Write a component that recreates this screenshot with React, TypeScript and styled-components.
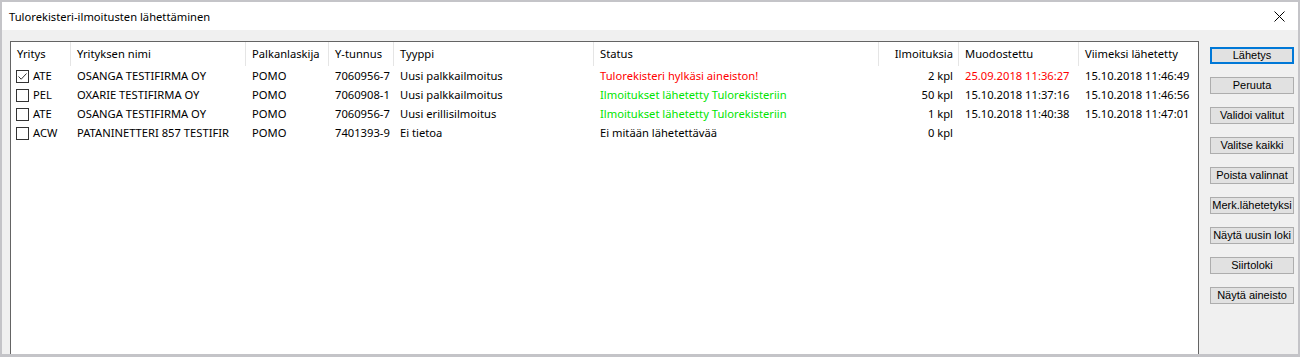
import React from "react";
import styled, { createGlobalStyle } from "styled-components";

const Global = createGlobalStyle`
  html, body { margin: 0; padding: 0; background: #fff; }
  body { font-family: "Noto Sans", "Liberation Sans", sans-serif; }
  * { box-sizing: border-box; }
`;

const COLS = "60px 175px 83px 65px 200px 285px 80px 120px 1fr";

const Window = styled.div`
  width: 1300px;
  height: 357px;
  border: 2px solid #c4c4c8;
  border-bottom-width: 3px;
  display: flex;
  flex-direction: column;
  overflow: hidden;
  background: #f0f0f0;
`;

const TitleBar = styled.div`
  height: 28px;
  flex: none;
  background: #fff;
  display: flex;
  align-items: center;
  justify-content: space-between;
  padding: 0 8px 0 7px;
  font-family: "Noto Sans", sans-serif;
  font-size: 11.2px;
  color: #000;
`;

const CloseBox = styled.div`
  width: 20px;
  height: 20px;
  display: flex;
  align-items: center;
  justify-content: center;
  margin-right: 1px;
`;

const Body = styled.div`
  flex: 1;
  display: flex;
  align-items: flex-start;
  padding: 11px 0 0 8px;
  min-height: 0;
`;

const ListPanel = styled.div`
  width: 1189px;
  height: 340px;
  flex: none;
  background: #fff;
  border: 1px solid #646464;
  font-family: "Noto Sans", sans-serif;
  font-size: 11.2px;
  color: #000;
`;

const HeaderRow = styled.div`
  display: grid;
  grid-template-columns: ${COLS};
  height: 24px;
`;

const HeaderCell = styled.div<{ $right?: boolean; $last?: boolean }>`
  display: flex;
  align-items: center;
  justify-content: ${(p) => (p.$right ? "flex-end" : "flex-start")};
  padding: ${(p) => (p.$right ? "0 5px 2px 0" : "0 0 2px 6px")};
  border-right: ${(p) => (p.$last ? "none" : "1px solid #e5e5e5")};
  white-space: nowrap;
`;

const DataRow = styled.div`
  display: grid;
  grid-template-columns: ${COLS};
  height: 19px;
`;

const Cell = styled.div<{ $right?: boolean; $color?: string }>`
  display: flex;
  align-items: center;
  justify-content: ${(p) => (p.$right ? "flex-end" : "flex-start")};
  padding: ${(p) => (p.$right ? "0 6px 0 0" : "0 0 0 6px")};
  color: ${(p) => p.$color || "#000"};
  white-space: nowrap;
  overflow: hidden;
`;

const FirstCell = styled(Cell)`
  padding-left: 5px;
  gap: 4px;
`;

const Check = styled.span`
  width: 13px;
  height: 13px;
  border: 1px solid #333;
  background: #fff;
  flex: none;
  display: flex;
  align-items: center;
  justify-content: center;
  margin-top: 2px;
`;

const ButtonColumn = styled.div`
  display: flex;
  flex-direction: column;
  gap: 13px;
  margin: 6px 0 0 11px;
`;

const Button = styled.button<{ $default?: boolean }>`
  width: 84px;
  height: 17px;
  padding: 0;
  margin: 0;
  background: #e1e1e1;
  border: ${(p) => (p.$default ? "2px solid #0078d7" : "1px solid #adadad")};
  font-family: "Liberation Sans", Arial, sans-serif;
  font-size: 11px;
  color: #000;
  line-height: 1;
  white-space: nowrap;
  display: flex;
  align-items: center;
  justify-content: center;
`;

type Row = {
  checked: boolean;
  code: string;
  name: string;
  calc: string;
  ytunnus: string;
  type: string;
  status: string;
  statusColor?: string;
  count: string;
  created: string;
  createdColor?: string;
  sent: string;
};

const RED = "#ff0000";
const GREEN = "#00e400";

const rows: Row[] = [
  {
    checked: true,
    code: "ATE",
    name: "OSANGA TESTIFIRMA OY",
    calc: "POMO",
    ytunnus: "7060956-7",
    type: "Uusi palkkailmoitus",
    status: "Tulorekisteri hylkäsi aineiston!",
    statusColor: RED,
    count: "2 kpl",
    created: "25.09.2018 11:36:27",
    createdColor: RED,
    sent: "15.10.2018 11:46:49",
  },
  {
    checked: false,
    code: "PEL",
    name: "OXARIE TESTIFIRMA OY",
    calc: "POMO",
    ytunnus: "7060908-1",
    type: "Uusi palkkailmoitus",
    status: "Ilmoitukset lähetetty Tulorekisteriin",
    statusColor: GREEN,
    count: "50 kpl",
    created: "15.10.2018 11:37:16",
    sent: "15.10.2018 11:46:56",
  },
  {
    checked: false,
    code: "ATE",
    name: "OSANGA TESTIFIRMA OY",
    calc: "POMO",
    ytunnus: "7060956-7",
    type: "Uusi erillisilmoitus",
    status: "Ilmoitukset lähetetty Tulorekisteriin",
    statusColor: GREEN,
    count: "1 kpl",
    created: "15.10.2018 11:40:38",
    sent: "15.10.2018 11:47:01",
  },
  {
    checked: false,
    code: "ACW",
    name: "PATANINETTERI 857 TESTIFIR",
    calc: "POMO",
    ytunnus: "7401393-9",
    type: "Ei tietoa",
    status: "Ei mitään lähetettävää",
    count: "0 kpl",
    created: "",
    sent: "",
  },
];

const headers = [
  "Yritys",
  "Yrityksen nimi",
  "Palkanlaskija",
  "Y-tunnus",
  "Tyyppi",
  "Status",
  "Ilmoituksia",
  "Muodostettu",
  "Viimeksi lähetetty",
];

const buttons = [
  "Lähetys",
  "Peruuta",
  "Validoi valitut",
  "Valitse kaikki",
  "Poista valinnat",
  "Merk.lähetetyksi",
  "Näytä uusin loki",
  "Siirtoloki",
  "Näytä aineisto",
];

const CloseIcon = () => (
  <svg width="11" height="11" viewBox="0 0 11 11">
    <path d="M0.5 0.5 L10.5 10.5 M10.5 0.5 L0.5 10.5" stroke="#000" strokeWidth="1" />
  </svg>
);

const CheckMark = () => (
  <svg width="11" height="11" viewBox="0 0 11 11">
    <path d="M1.5 5.5 L4.2 8.2 L9.5 2.5" stroke="#333" strokeWidth="1" fill="none" />
  </svg>
);

export default function App() {
  return (
    <>
      <Global />
      <Window>
        <TitleBar>
          <span>Tulorekisteri-ilmoitusten lähettäminen</span>
          <CloseBox>
            <CloseIcon />
          </CloseBox>
        </TitleBar>
        <Body>
          <ListPanel>
            <HeaderRow>
              {headers.map((h, i) => (
                <HeaderCell key={h} $right={i === 6} $last={i === headers.length - 1}>
                  {h}
                </HeaderCell>
              ))}
            </HeaderRow>
            {rows.map((r, i) => (
              <DataRow key={i}>
                <FirstCell>
                  <Check>{r.checked && <CheckMark />}</Check>
                  <span>{r.code}</span>
                </FirstCell>
                <Cell>{r.name}</Cell>
                <Cell>{r.calc}</Cell>
                <Cell>{r.ytunnus}</Cell>
                <Cell>{r.type}</Cell>
                <Cell $color={r.statusColor}>{r.status}</Cell>
                <Cell $right>{r.count}</Cell>
                <Cell $color={r.createdColor}>{r.created}</Cell>
                <Cell>{r.sent}</Cell>
              </DataRow>
            ))}
          </ListPanel>
          <ButtonColumn>
            {buttons.map((b, i) => (
              <Button key={b} $default={i === 0}>
                {b}
              </Button>
            ))}
          </ButtonColumn>
        </Body>
      </Window>
    </>
  );
}
